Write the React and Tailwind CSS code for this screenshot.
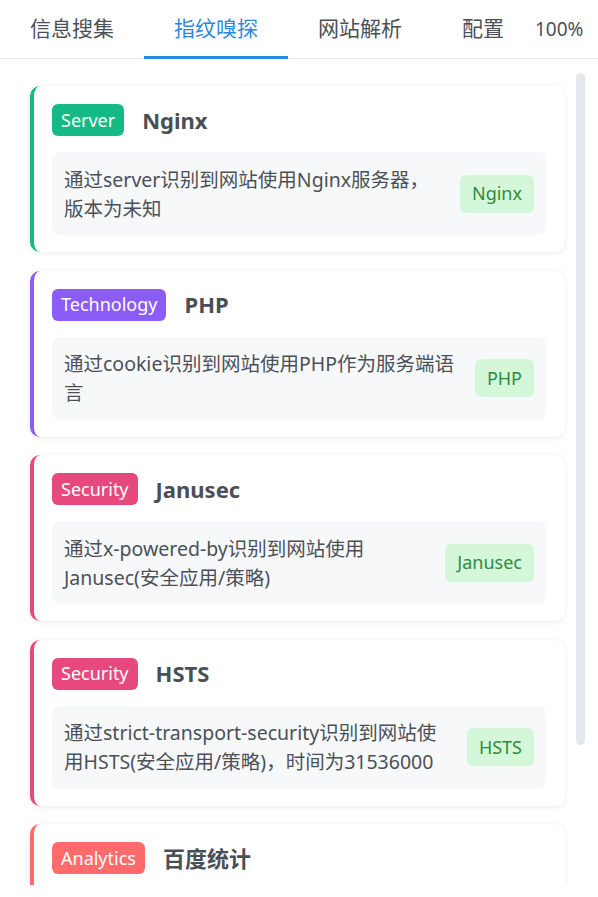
const tabs = ['信息搜集', '指纹嗅探', '网站解析']

const items = [
    {
        category: 'Server',
        badge: 'bg-[#14b984]',
        border: 'border-[#14b984]',
        name: 'Nginx',
        desc: '通过server识别到网站使用Nginx服务器，版本为未知',
        tag: 'Nginx',
    },
    {
        category: 'Technology',
        badge: 'bg-[#8b5cf6]',
        border: 'border-[#8b5cf6]',
        name: 'PHP',
        desc: '通过cookie识别到网站使用PHP作为服务端语言',
        tag: 'PHP',
    },
    {
        category: 'Security',
        badge: 'bg-[#e6497e]',
        border: 'border-[#e6497e]',
        name: 'Janusec',
        desc: '通过x-powered-by识别到网站使用Janusec(安全应用/策略)',
        tag: 'Janusec',
    },
    {
        category: 'Security',
        badge: 'bg-[#e6497e]',
        border: 'border-[#e6497e]',
        name: 'HSTS',
        desc: '通过strict-transport-security识别到网站使用HSTS(安全应用/策略)，时间为31536000',
        tag: 'HSTS',
    },
    {
        category: 'Analytics',
        badge: 'bg-[#ff6b6b]',
        border: 'border-[#ff6b6b]',
        name: '百度统计',
        desc: '通过script识别到网站使用百度统计',
        tag: '百度统计',
    },
]

function FingerCard({ item }) {
    return (
        <div className={`shrink-0 bg-white rounded-[10px] border-l-4 ${item.border} shadow-[0_1px_6px_rgba(0,0,0,0.08)] pl-[18px] pr-[19px] pt-[18px] pb-[17px]`}>
            <div className="flex items-center gap-[18px] h-[32px]">
                <span className={`${item.badge} text-white text-[18px] h-[32px] px-[9px] rounded-[6px] flex items-center`}>
                    {item.category}
                </span>
                <span className="text-[22px] font-bold text-[#4a4f57]">{item.name}</span>
            </div>
            <div className="mt-[16px] bg-[#f7f8fa] rounded-[8px] h-[83px] px-[12px] flex items-center justify-between gap-[18px]">
                <p className="text-[19.5px] leading-[29px] text-[#4b5058]">{item.desc}</p>
                <span className="shrink-0 bg-[#d5f7d9] text-[#2e8b3e] text-[18px] h-[38px] px-[12px] rounded-[6px] flex items-center">
                    {item.tag}
                </span>
            </div>
        </div>
    )
}

export default function App() {
    return (
        <div
            className="w-[598px] h-[897px] overflow-hidden bg-white"
            style={{ fontFamily: '"Noto Sans", "Noto Sans CJK SC", sans-serif' }}
        >
            <div className="h-[59px] border-b border-[#e6e8eb] flex">
                {tabs.map((t, i) => (
                    <div
                        key={t}
                        className={`relative w-[144px] shrink-0 flex items-center justify-center text-[21px] ${i === 1 ? 'text-[#2b88e0]' : 'text-[#4b5058]'}`}
                    >
                        {t}
                        {i === 1 && <div className="absolute left-0 right-0 -bottom-px h-[3px] bg-[#2b88e0]" />}
                    </div>
                ))}
                <div className="w-[103px] shrink-0 flex items-center pl-[30px] text-[21px] text-[#4b5058]">配置</div>
                <div className="flex items-center text-[19px] text-[#4b5058] whitespace-nowrap">100%</div>
            </div>

            <div className="relative h-[826px] overflow-hidden">
                <div className="flex flex-col gap-[18.5px] pl-[30px] pr-[33px] pt-[27px]">
                    {items.map((item, i) => (
                        <FingerCard key={i} item={item} />
                    ))}
                </div>
                <div className="absolute left-[576px] top-[14px] w-[9px] h-[672px] rounded-full bg-[#e5e8ec]" />
            </div>
        </div>
    )
}
